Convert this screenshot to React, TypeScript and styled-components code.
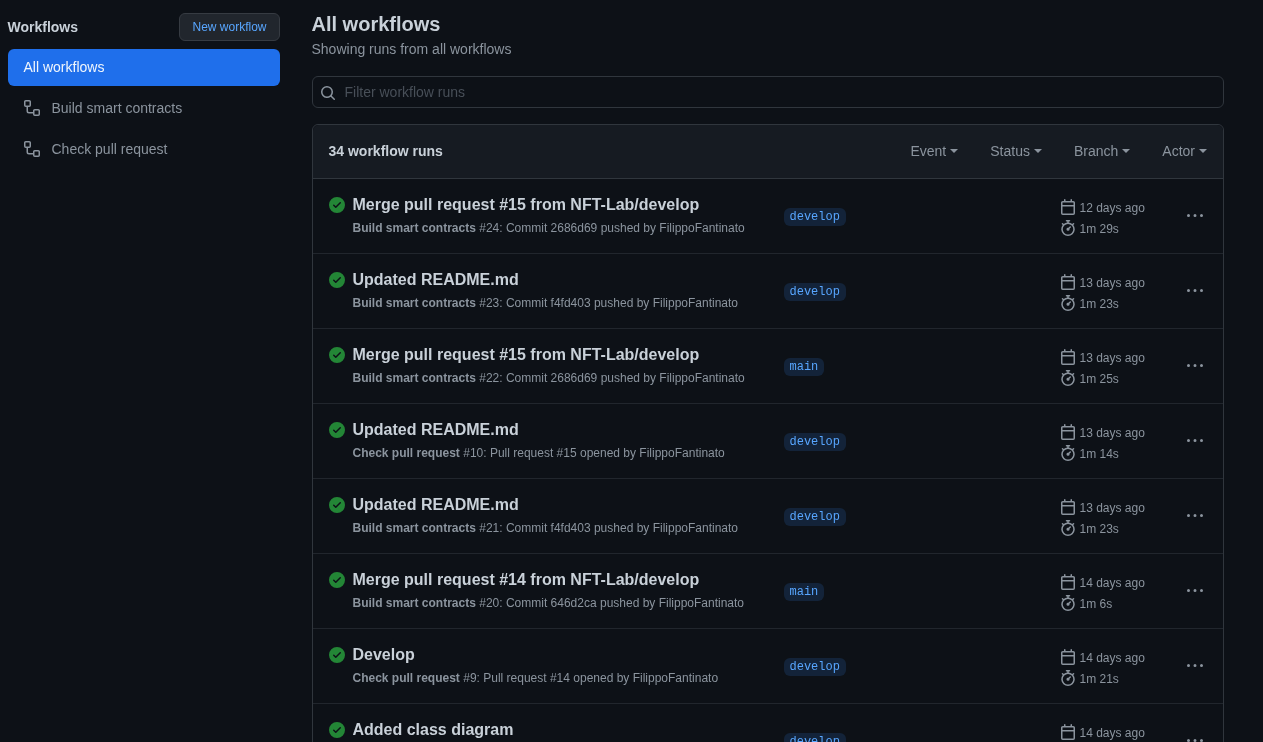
import React from "react";
import styled, { createGlobalStyle } from "styled-components";

const GlobalStyle = createGlobalStyle`
  html, body {
    margin: 0;
    height: 100%;
    overflow: hidden;
    background: #0d1117;
    color: #c9d1d9;
    font-family: "Liberation Sans", Arial, sans-serif;
    font-size: 14px;
  }
  * { box-sizing: border-box; }
`;

const Page = styled.div`
  display: flex;
  width: 1263px;
  height: 742px;
  overflow: hidden;
  padding-left: 7.5px;
  will-change: transform;
`;

const Sidebar = styled.aside`
  width: 272px;
  flex-shrink: 0;
  padding-top: 13px;
`;

const SidebarHeader = styled.div`
  display: flex;
  justify-content: space-between;
  align-items: center;
  margin-bottom: 8px;
`;

const SidebarTitle = styled.h2`
  margin: 0;
  font-size: 14px;
  font-weight: 700;
  color: #c9d1d9;
`;

const NewButton = styled.button`
  width: 101px;
  height: 28px;
  padding: 0 0 0 1px;
  font: inherit;
  font-size: 12px;
  color: #58a6ff;
  background: #21262d;
  border: 1px solid #363b42;
  border-radius: 6px;
`;

const NavList = styled.nav`
  display: flex;
  flex-direction: column;
  gap: 4px;
`;

const NavItem = styled.a<{ $active?: boolean }>`
  display: flex;
  align-items: center;
  gap: 12px;
  height: 37px;
  padding: 0 0 1px 16px;
  border-radius: 6px;
  color: ${(p) => (p.$active ? "#f0f6fc" : "#8b949e")};
  background: ${(p) => (p.$active ? "#1f6feb" : "transparent")};
  svg { color: #8b949e; }
`;

const Main = styled.main`
  width: 912px;
  margin-left: 32px;
  flex-shrink: 0;
  padding-top: 13px;
`;

const Title = styled.h1`
  margin: 0;
  font-size: 20px;
  line-height: 23px;
  font-weight: 700;
  color: #c9d1d9;
`;

const Subtitle = styled.p`
  margin: 5px 0 0;
  line-height: 17px;
  color: #8b949e;
`;

const FilterBox = styled.div`
  position: relative;
  height: 32px;
  margin: 18px 0 16px;
  svg {
    position: absolute;
    left: 8px;
    top: 9px;
    color: #8b949e;
  }
`;

const FilterInput = styled.input`
  width: 100%;
  height: 100%;
  padding: 0 12px 0 32px;
  font: inherit;
  color: #c9d1d9;
  background: #0d1117;
  border: 1px solid #30363d;
  border-radius: 6px;
  outline: none;
  &::placeholder { color: #484f58; opacity: 1; }
`;

const RunsBox = styled.section`
  border: 1px solid #30363d;
  border-radius: 6px;
`;

const RunsHeader = styled.div`
  display: flex;
  justify-content: space-between;
  align-items: center;
  height: 54px;
  padding: 0 15.5px 1px 16px;
  background: #161b22;
  border-bottom: 1px solid #30363d;
  border-radius: 6px 6px 0 0;
`;

const RunCount = styled.strong`
  font-weight: 700;
  color: #c9d1d9;
`;

const Filters = styled.div`
  display: flex;
  gap: 32px;
`;

const FilterMenu = styled.span`
  display: flex;
  align-items: center;
  gap: 4px;
  color: #8b949e;
  &::after {
    content: "";
    border-top: 4px solid currentColor;
    border-left: 4px solid transparent;
    border-right: 4px solid transparent;
  }
`;

const Row = styled.div`
  display: grid;
  grid-template-columns: 455px 276px 1fr 16px;
  align-items: center;
  height: 75px;
  padding: 0 20px 0 16px;
  border-bottom: 1px solid #21262d;
`;

const RunInfo = styled.div`
  display: grid;
  grid-template-columns: 16px 1fr;
  column-gap: 8px;
  row-gap: 6px;
  svg { color: #238636; margin-top: 1px; }
`;

const RunTitle = styled.div`
  font-size: 16px;
  line-height: 18px;
  font-weight: 700;
  color: #c9d1d9;
`;

const RunDetail = styled.div`
  grid-column: 2;
  font-size: 12px;
  line-height: 16px;
  color: #8b949e;
  b { font-weight: 700; }
`;

const BranchTag = styled.span`
  justify-self: start;
  margin-top: 2px;
  padding: 0 6px;
  font-family: "Liberation Mono", monospace;
  font-size: 12px;
  line-height: 18px;
  color: #58a6ff;
  background: rgba(56, 139, 253, 0.15);
  border-radius: 6px;
`;

const Meta = styled.div`
  display: flex;
  flex-direction: column;
  gap: 5px;
  margin-top: 3px;
`;

const MetaLine = styled.div`
  display: flex;
  align-items: center;
  gap: 4px;
  height: 16px;
  font-size: 12px;
  color: #8b949e;
`;

const MetaText = styled.span`
  padding-top: 2px;
`;

const MoreButton = styled.span`
  display: flex;
  color: #8b949e;
`;

const Icon = ({ d }: { d: string }) => (
  <svg width="16" height="16" viewBox="0 0 16 16" fill="currentColor">
    <path fillRule="evenodd" d={d} />
  </svg>
);

const workflowPath = "M0 1.75C0 .784.784 0 1.75 0h3.5C6.216 0 7 .784 7 1.75v3.5A1.75 1.75 0 0 1 5.25 7H4v4a1 1 0 0 0 1 1h4v-1.25C9 9.784 9.784 9 10.75 9h3.5c.966 0 1.75.784 1.75 1.75v3.5A1.75 1.75 0 0 1 14.25 16h-3.5A1.75 1.75 0 0 1 9 14.25v-.75H5A2.5 2.5 0 0 1 2.5 11V7h-.75A1.75 1.75 0 0 1 0 5.25Zm1.75-.25a.25.25 0 0 0-.25.25v3.5c0 .138.112.25.25.25h3.5a.25.25 0 0 0 .25-.25v-3.5a.25.25 0 0 0-.25-.25Zm9 9a.25.25 0 0 0-.25.25v3.5c0 .138.112.25.25.25h3.5a.25.25 0 0 0 .25-.25v-3.5a.25.25 0 0 0-.25-.25Z";
const searchPath = "M10.68 11.74a6 6 0 0 1-7.922-8.982 6 6 0 0 1 8.982 7.922l3.04 3.04a.749.749 0 0 1-.326 1.275.749.749 0 0 1-.734-.215ZM11.5 7a4.499 4.499 0 1 0-8.997 0A4.499 4.499 0 0 0 11.5 7Z";
const checkPath = "M8 16A8 8 0 1 1 8 0a8 8 0 0 1 0 16Zm3.78-9.72a.751.751 0 0 0-.018-1.042.751.751 0 0 0-1.042-.018L6.75 9.19 5.28 7.72a.751.751 0 0 0-1.042.018.751.751 0 0 0-.018 1.042l2 2a.75.75 0 0 0 1.06 0Z";
const calendarPath = "M4.75 0a.75.75 0 0 1 .75.75V2h5V.75a.75.75 0 0 1 1.5 0V2h1.25c.966 0 1.75.784 1.75 1.75v10.5A1.75 1.75 0 0 1 13.25 16H2.75A1.75 1.75 0 0 1 1 14.25V3.75C1 2.784 1.784 2 2.75 2H4V.75A.75.75 0 0 1 4.75 0ZM2.5 7.5v6.75c0 .138.112.25.25.25h10.5a.25.25 0 0 0 .25-.25V7.5Zm10.75-4H2.75a.25.25 0 0 0-.25.25V6h11V3.75a.25.25 0 0 0-.25-.25Z";
const stopwatchPath = "M5.75.75A.75.75 0 0 1 6.5 0h3a.75.75 0 0 1 0 1.5h-.75v1l-.001.041a6.724 6.724 0 0 1 3.464 1.435l.007-.006.75-.75a.75.75 0 1 1 1.06 1.06l-.75.75-.006.007a6.75 6.75 0 1 1-10.548 0L2.72 5.03l-.75-.75a.75.75 0 0 1 1.06-1.06l.75.75.007.006A6.72 6.72 0 0 1 7.25 2.541V1.5H6.5a.75.75 0 0 1-.75-.75ZM8 14.5a5.25 5.25 0 1 0-.001-10.501A5.25 5.25 0 0 0 8 14.5Zm.389-6.7 1.33-1.33a.75.75 0 1 1 1.061 1.06L9.45 8.861A1.503 1.503 0 0 1 8 10.75a1.499 1.499 0 1 1 .389-2.95Z";
const kebabPath = "M8 9a1.5 1.5 0 1 0 0-3 1.5 1.5 0 0 0 0 3ZM1.5 9a1.5 1.5 0 1 0 0-3 1.5 1.5 0 0 0 0 3Zm13 0a1.5 1.5 0 1 0 0-3 1.5 1.5 0 0 0 0 3Z";

const runs = [
  { title: "Merge pull request #15 from NFT-Lab/develop", workflow: "Build smart contracts", detail: "#24: Commit 2686d69 pushed by FilippoFantinato", branch: "develop", date: "12 days ago", time: "1m 29s" },
  { title: "Updated README.md", workflow: "Build smart contracts", detail: "#23: Commit f4fd403 pushed by FilippoFantinato", branch: "develop", date: "13 days ago", time: "1m 23s" },
  { title: "Merge pull request #15 from NFT-Lab/develop", workflow: "Build smart contracts", detail: "#22: Commit 2686d69 pushed by FilippoFantinato", branch: "main", date: "13 days ago", time: "1m 25s" },
  { title: "Updated README.md", workflow: "Check pull request", detail: "#10: Pull request #15 opened by FilippoFantinato", branch: "develop", date: "13 days ago", time: "1m 14s" },
  { title: "Updated README.md", workflow: "Build smart contracts", detail: "#21: Commit f4fd403 pushed by FilippoFantinato", branch: "develop", date: "13 days ago", time: "1m 23s" },
  { title: "Merge pull request #14 from NFT-Lab/develop", workflow: "Build smart contracts", detail: "#20: Commit 646d2ca pushed by FilippoFantinato", branch: "main", date: "14 days ago", time: "1m 6s" },
  { title: "Develop", workflow: "Check pull request", detail: "#9: Pull request #14 opened by FilippoFantinato", branch: "develop", date: "14 days ago", time: "1m 21s" },
  { title: "Added class diagram", workflow: "Build smart contracts", detail: "#19: Commit 646d2ca pushed by FilippoFantinato", branch: "develop", date: "14 days ago", time: "1m 20s" },
];

function App() {
  return (
    <>
      <GlobalStyle />
      <Page>
        <Sidebar>
          <SidebarHeader>
            <SidebarTitle>Workflows</SidebarTitle>
            <NewButton>New workflow</NewButton>
          </SidebarHeader>
          <NavList>
            <NavItem $active>All workflows</NavItem>
            <NavItem><Icon d={workflowPath} />Build smart contracts</NavItem>
            <NavItem><Icon d={workflowPath} />Check pull request</NavItem>
          </NavList>
        </Sidebar>
        <Main>
          <Title>All workflows</Title>
          <Subtitle>Showing runs from all workflows</Subtitle>
          <FilterBox>
            <Icon d={searchPath} />
            <FilterInput placeholder="Filter workflow runs" />
          </FilterBox>
          <RunsBox>
            <RunsHeader>
              <RunCount>34 workflow runs</RunCount>
              <Filters>
                <FilterMenu>Event</FilterMenu>
                <FilterMenu>Status</FilterMenu>
                <FilterMenu>Branch</FilterMenu>
                <FilterMenu>Actor</FilterMenu>
              </Filters>
            </RunsHeader>
            {runs.map((run, i) => (
              <Row key={i}>
                <RunInfo>
                  <Icon d={checkPath} />
                  <RunTitle>{run.title}</RunTitle>
                  <RunDetail><b>{run.workflow}</b> {run.detail}</RunDetail>
                </RunInfo>
                <BranchTag>{run.branch}</BranchTag>
                <Meta>
                  <MetaLine><Icon d={calendarPath} /><MetaText>{run.date}</MetaText></MetaLine>
                  <MetaLine><Icon d={stopwatchPath} /><MetaText>{run.time}</MetaText></MetaLine>
                </Meta>
                <MoreButton><Icon d={kebabPath} /></MoreButton>
              </Row>
            ))}
          </RunsBox>
        </Main>
      </Page>
    </>
  );
}

export default App;
